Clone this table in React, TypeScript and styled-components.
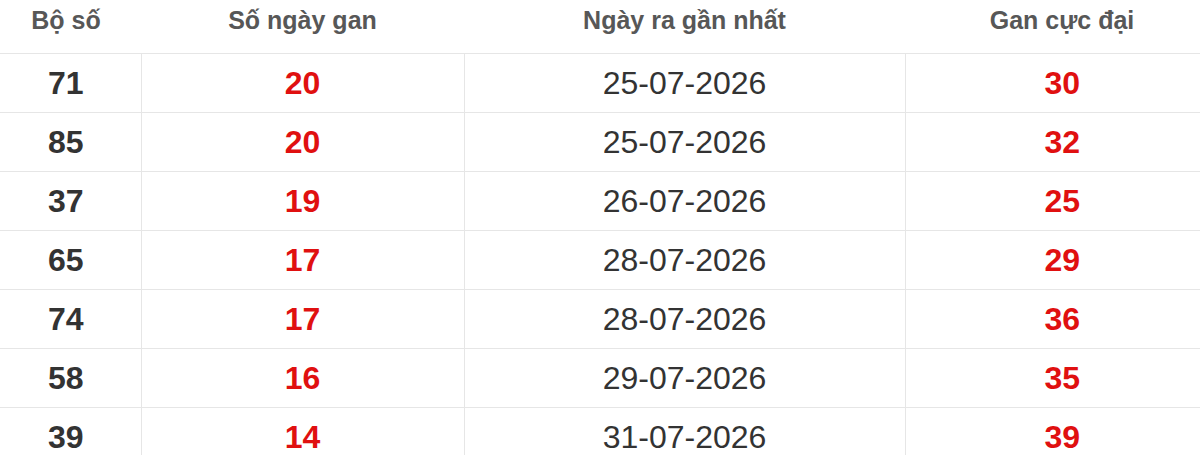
import styled, { createGlobalStyle } from 'styled-components';

const GlobalStyle = createGlobalStyle`
  html, body {
    margin: 0;
    padding: 0;
    background: #fff;
    overflow: hidden;
  }
  body {
    font-family: 'Liberation Sans', Arial, sans-serif;
  }
`;

// the table is a little wider than the view and cropped on both sides
const Table = styled.table`
  width: 1228px;
  margin-left: -9px;
  border-collapse: collapse;
  table-layout: fixed;
  font-family: 'Liberation Sans', Arial, sans-serif;
`;

const HeadCell = styled.th`
  height: 29px;
  padding: 6px 0 18px;
  font-size: 25px;
  line-height: 29px;
  font-weight: 700;
  color: #575757;
  text-align: center;
  border-bottom: 1px solid #e6e6e6;
`;

const Row = styled.tr`
  border-bottom: 1px solid #e6e6e6;
`;

const Cell = styled.td<{ $tone?: 'dark' | 'red' | 'plain' }>`
  height: 58px;
  padding: 0;
  font-size: 32px;
  line-height: 36px;
  text-align: center;
  vertical-align: middle;
  font-weight: ${props => (props.$tone === 'plain' ? 400 : 700)};
  color: ${props => (props.$tone === 'red' ? '#e01010' : '#333')};

  & + & {
    border-left: 1px solid #e6e6e6;
  }
`;

const rows = [
  { pair: '71', days: 20, last: '25-07-2026', max: 30 },
  { pair: '85', days: 20, last: '25-07-2026', max: 32 },
  { pair: '37', days: 19, last: '26-07-2026', max: 25 },
  { pair: '65', days: 17, last: '28-07-2026', max: 29 },
  { pair: '74', days: 17, last: '28-07-2026', max: 36 },
  { pair: '58', days: 16, last: '29-07-2026', max: 35 },
  { pair: '39', days: 14, last: '31-07-2026', max: 39 },
];

export default function App() {
  return (
    <>
      <GlobalStyle />
      <Table>
        <colgroup>
          <col style={{ width: 150 }} />
          <col style={{ width: 323 }} />
          <col style={{ width: 441 }} />
          <col style={{ width: 314 }} />
        </colgroup>
        <thead>
          <tr>
            <HeadCell>Bộ số</HeadCell>
            <HeadCell>Số ngày gan</HeadCell>
            <HeadCell>Ngày ra gần nhất</HeadCell>
            <HeadCell>Gan cực đại</HeadCell>
          </tr>
        </thead>
        <tbody>
          {rows.map(r => (
            <Row key={r.pair}>
              <Cell $tone="dark">{r.pair}</Cell>
              <Cell $tone="red">{r.days}</Cell>
              <Cell $tone="plain">{r.last}</Cell>
              <Cell $tone="red">{r.max}</Cell>
            </Row>
          ))}
        </tbody>
      </Table>
    </>
  );
}
